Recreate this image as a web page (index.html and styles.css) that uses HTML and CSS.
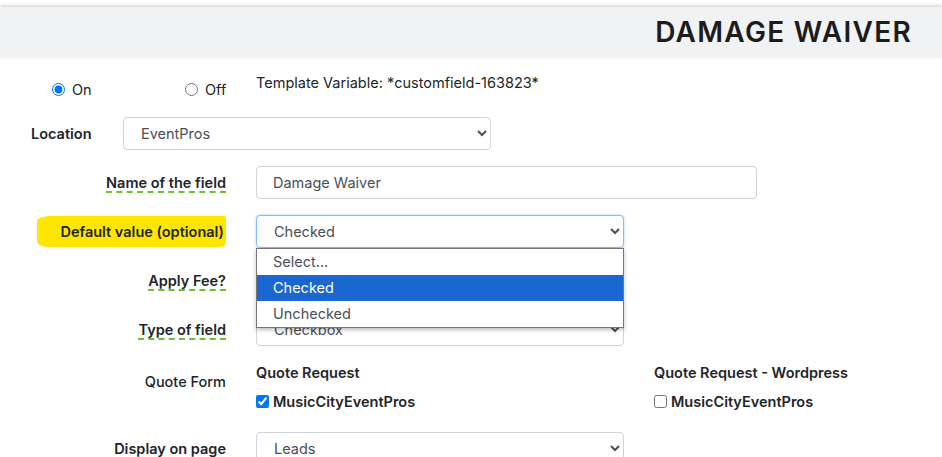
FILE: index.html
```html
<!DOCTYPE html>
<html>
<head>
<meta charset="utf-8">
<link rel="stylesheet" href="styles.css">
</head>
<body>
<header class="topbar"><h1 class="title">DAMAGE WAIVER</h1></header>
<form class="form">
  <div class="status-row">
    <label class="radio radio-on"><input type="radio" name="st" checked> On</label>
    <label class="radio radio-off"><input type="radio" name="st"> Off</label>
    <span class="template">Template Variable: *customfield-163823*</span>
  </div>
  <div class="location-row">
    <span class="loc-label">Location</span>
    <select class="control loc-select"><option>EventPros</option></select>
  </div>
  <div class="row">
    <div class="lbl"><span class="tip">Name of the field</span></div>
    <input class="control text-input" type="text" value="Damage Waiver">
  </div>
  <div class="row">
    <div class="lbl"><span class="hl">Default value (optional)</span></div>
    <div class="sel-wrap">
      <select class="control sel focus"><option>Checked</option></select>
      <div class="menu">
        <div class="opt">Select...</div>
        <div class="opt active">Checked</div>
        <div class="opt">Unchecked</div>
      </div>
    </div>
  </div>
  <div class="row">
    <div class="lbl"><span class="tip">Apply Fee?</span></div>
    <select class="control sel"><option>Yes</option></select>
  </div>
  <div class="row">
    <div class="lbl"><span class="tip">Type of field</span></div>
    <select class="control sel"><option>Checkbox</option></select>
  </div>
  <div class="row quote-row">
    <div class="lbl qlbl">Quote Form</div>
    <div class="quote-cols">
      <div class="qcol qcol-1">
        <div class="qhead">Quote Request</div>
        <label class="chk"><input type="checkbox" checked> MusicCityEventPros</label>
      </div>
      <div class="qcol">
        <div class="qhead">Quote Request - Wordpress</div>
        <label class="chk"><input type="checkbox"> MusicCityEventPros</label>
      </div>
    </div>
  </div>
  <div class="row display-row">
    <div class="lbl">Display on page</div>
    <select class="control sel"><option>Leads</option></select>
  </div>
</form>
</body>
</html>
```
FILE: styles.css
```css
html, body {
  margin: 0;
  padding: 0;
  background: #fff;
  overflow: hidden;
}
body {
  font-family: Inter, "DejaVu Sans", sans-serif;
  font-size: 14.5px;
  color: #212529;
  padding-top: 7px;
}
.topbar {
  height: 50px;
  background: #f1f2f4;
  box-shadow: 0 -1px 4px rgba(0, 0, 0, 0.22);
  display: flex;
  align-items: center;
  justify-content: flex-end;
  padding-right: 30px;
}
.title {
  margin: 0;
  font-size: 28px;
  font-weight: 600;
  letter-spacing: 1.3px;
  color: #1c1c1c;
}
.form {
  display: flex;
  flex-direction: column;
}
.status-row {
  display: flex;
  align-items: flex-start;
  height: 60px;
  padding-top: 17px;
  box-sizing: border-box;
}
.radio {
  display: flex;
  align-items: center;
  gap: 7px;
  margin-top: 7px;
}
.radio input {
  margin: 0;
  width: 13px;
  height: 13px;
}
.radio-on { margin-left: 52px; width: 133px; }
.radio-off { width: 71px; }
.template { color: #212529; }
.location-row {
  display: flex;
  align-items: center;
  height: 33px;
}
.loc-label {
  font-weight: 600;
  margin-left: 31px;
  width: 92px;
}
.control {
  box-sizing: border-box;
  height: 33px;
  border: 1px solid #ced4da;
  border-radius: 4px;
  background: #fff;
  font-family: inherit;
  font-size: 14.5px;
  color: #495057;
  margin: 0;
}
.loc-select { width: 368px; padding-left: 13px; }
.row {
  display: grid;
  grid-template-columns: 226px 1fr;
  column-gap: 30px;
  align-items: center;
  margin-top: 16px;
}
.lbl {
  text-align: right;
  font-weight: 600;
}
.tip {
  text-decoration: underline dashed #6abf3a;
  text-decoration-thickness: 2px;
  text-underline-offset: 3px;
}
.hl {
  background: #ffe600;
  padding: 7px 2px 7px 23px;
  border-radius: 16px 2px 6px 10px / 5px 2px 4px 6px;
}
.text-input { width: 501px; padding: 0 16px; }
.sel { width: 368px; padding-left: 13px; }
.sel-wrap { position: relative; }
.focus {
  border-color: #80bdff;
  box-shadow: 0 0 3px rgba(0, 123, 255, 0.35);
}
.menu {
  position: absolute;
  left: 0;
  top: 33px;
  width: 368px;
  box-sizing: border-box;
  background: #fff;
  border: 1px solid #767676;
  box-shadow: 0 2px 4px rgba(0, 0, 0, 0.25);
  z-index: 5;
}
.opt {
  height: 26px;
  line-height: 26px;
  padding-left: 16px;
  color: #495057;
}
.opt.active { background: #1a67d2; color: #fff; }
.quote-row { align-items: start; margin-top: 18px; }
.qlbl { padding-top: 9px; font-weight: 500; }
.quote-cols { display: flex; }
.qcol-1 { width: 398px; }
.qhead { font-weight: 600; height: 20px; }
.chk {
  display: flex;
  align-items: center;
  gap: 4px;
  margin-top: 9px;
  font-weight: 600;
}
.chk input { margin: 0; width: 13px; height: 13px; }
.display-row { margin-top: 22px; }
```
